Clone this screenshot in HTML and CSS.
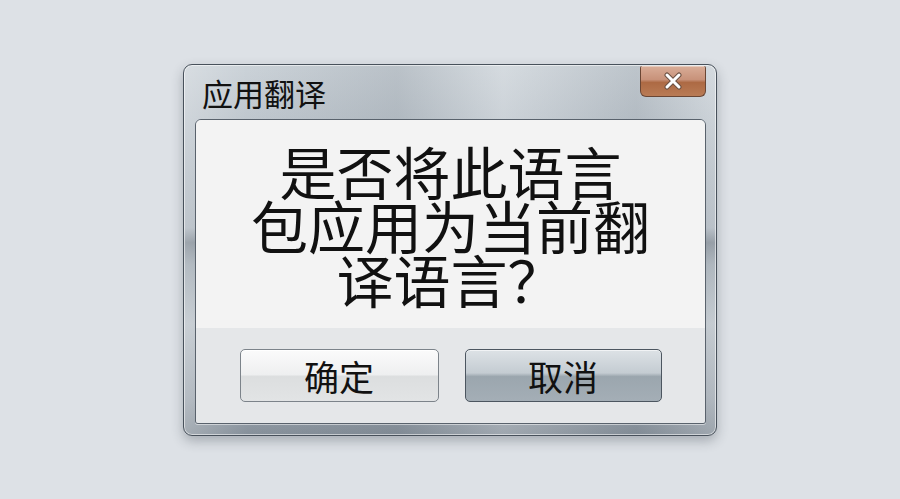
FILE: index.html
```html
<!DOCTYPE html>
<html lang="zh-CN">
<head>
    <meta charset="UTF-8">
    <meta name="viewport" content="width=device-width, initial-scale=1.0">
    <title>应用翻译</title>
    <link rel="stylesheet" href="styles.css">
</head>
<body>

<div class="dialog">
    <div class="titlebar">
        <span class="title">应用翻译</span>
        <button class="close" type="button" aria-label="关闭">
            <svg width="22" height="18" viewBox="0 0 22 18">
                <path d="M5 3 L17 15 M17 3 L5 15" stroke="#6b5042" stroke-width="5" stroke-linecap="round"/>
                <path d="M5 3 L17 15 M17 3 L5 15" stroke="#ffffff" stroke-width="3" stroke-linecap="round"/>
            </svg>
        </button>
    </div>

    <div class="panel">
        <div class="message">
            <p>是否将此语言<br>包应用为当前翻<br>译语言？</p>
        </div>
        <div class="actions">
            <button class="btn btn-ok" type="button">确定</button>
            <button class="btn btn-cancel" type="button">取消</button>
        </div>
    </div>
</div>

</body>
</html>
```

FILE: styles.css
```css
body {
    font-family: "Noto Sans CJK SC", "Noto Sans", sans-serif;
    background-color: #dde1e6;
    color: #111;
    margin: 0;
    padding: 0;
    display: flex;
    justify-content: center;
    align-items: center;
    height: 100vh;
}
.dialog {
    width: 534px;
    height: 372px;
    box-sizing: border-box;
    padding: 0 10px 11px 11px;
    border: 1px solid #48515b;
    border-radius: 9px;
    background:
        linear-gradient(90deg, rgba(255, 255, 255, 0.25) 0%, rgba(255, 255, 255, 0) 12%, rgba(90, 100, 110, 0.15) 40%, rgba(255, 255, 255, 0.2) 60%, rgba(90, 100, 110, 0.12) 85%, rgba(255, 255, 255, 0.2) 100%),
        linear-gradient(180deg, #cbd2d8 0%, #b3bcc4 30%, #aab3bc 44%, #7f8993 48%, #9da7b0 54%, #b8c0c7 70%, #9ea7b0 90%, #86909a 100%);
    box-shadow: inset 0 0 0 1px rgba(255, 255, 255, 0.55), 0 5px 12px rgba(40, 50, 60, 0.3);
    display: flex;
    flex-direction: column;
}
.titlebar {
    height: 54px;
    display: flex;
    justify-content: space-between;
    align-items: flex-start;
}
.title {
    font-size: 31px;
    line-height: 31px;
    margin: 12px 0 0 7px;
    color: #111;
}
.close {
    width: 66px;
    height: 31px;
    margin-top: 1px;
    padding: 0;
    border: 1px solid #6a4634;
    border-top: none;
    border-radius: 2px 2px 6px 6px;
    background: linear-gradient(180deg, #d9ad98 0%, #c8927a 45%, #ad6a44 55%, #b97b55 100%);
    box-shadow: inset 0 1px 0 rgba(255, 255, 255, 0.35);
    display: flex;
    justify-content: center;
    align-items: center;
}
.panel {
    flex: 1;
    border: 1px solid #59626c;
    border-radius: 6px 6px 3px 3px;
    overflow: hidden;
    display: flex;
    flex-direction: column;
    box-shadow: 0 1px 0 rgba(255, 255, 255, 0.5);
}
.message {
    height: 208px;
    background-color: #f3f3f3;
    display: flex;
    justify-content: center;
    align-items: center;
}
.message p {
    margin: 0;
    font-size: 57px;
    line-height: 54px;
    text-align: center;
    color: #111;
}
.actions {
    flex: 1;
    background-color: #e5e7e9;
    display: flex;
    justify-content: center;
    align-items: center;
    gap: 26px;
}
.btn {
    width: 199px;
    height: 53px;
    font-family: inherit;
    font-size: 35px;
    line-height: 1;
    color: #111;
    border-radius: 5px;
    padding: 0;
}
.btn-ok {
    border: 1px solid #7c838a;
    background: linear-gradient(180deg, #fbfbfb 0%, #eeeff0 48%, #dcdedf 52%, #e2e4e5 100%);
    box-shadow: inset 0 1px 0 #ffffff;
}
.btn-cancel {
    width: 197px;
    border: 1px solid #4c5660;
    background: linear-gradient(180deg, #dde2e6 0%, #c4ccd2 45%, #9ba6ae 52%, #a4aeb6 100%);
    box-shadow: inset 0 1px 0 rgba(255, 255, 255, 0.6);
}
```
